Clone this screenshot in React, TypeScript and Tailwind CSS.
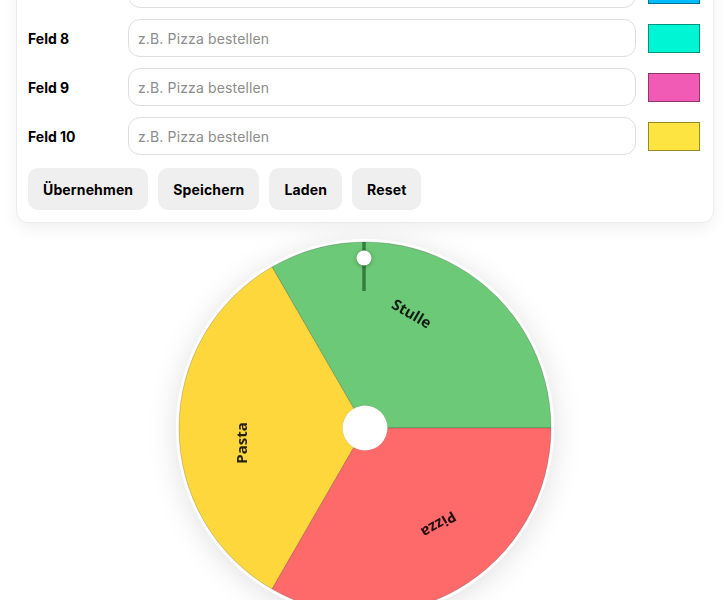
import React from 'react';

interface Field {
  label: string;
  color: string;
}

const fields: Field[] = [
  { label: 'Feld 7', color: '#00bbf9' },
  { label: 'Feld 8', color: '#00f5d4' },
  { label: 'Feld 9', color: '#f15bb5' },
  { label: 'Feld 10', color: '#fee440' },
];

const buttons = ['Übernehmen', 'Speichern', 'Laden', 'Reset'];

// wheel geometry (svg coords): center 189/189, radius 186
const Wheel: React.FC = () => (
  <svg width="378" height="378" viewBox="0 0 378 378" className="block drop-shadow-[0_4px_14px_rgba(0,0,0,0.12)]">
    <circle cx="189" cy="189" r="189" fill="#ffffff" />
    <path d="M189 189 L375 189 A186 186 0 0 0 96 27.92 Z" fill="#6cc977" stroke="rgba(0,0,0,0.18)" strokeWidth="1" />
    <path d="M189 189 L96 27.92 A186 186 0 0 0 96 350.08 Z" fill="#fdd73c" stroke="rgba(0,0,0,0.18)" strokeWidth="1" />
    <path d="M189 189 L96 350.08 A186 186 0 0 0 375 189 Z" fill="#fe6a6a" stroke="rgba(0,0,0,0.18)" strokeWidth="1" />

    <g fontFamily="'Open Sans', 'DejaVu Sans', sans-serif" fontWeight="700" fontSize="15" fill="rgba(0,0,0,0.85)" textAnchor="middle" dominantBaseline="central">
      <text transform="translate(236 74) rotate(30)">Stulle</text>
      <text transform="translate(65 204) rotate(-90)">Pasta</text>
      <text transform="translate(263 286) rotate(150)">Pizza</text>
    </g>

    {/* pointer */}
    <line x1="188" y1="3" x2="188" y2="52" stroke="rgba(0,50,10,0.5)" strokeWidth="3.5" />
    <circle cx="188" cy="19" r="7.5" fill="#ffffff" className="drop-shadow-[0_1px_2px_rgba(0,0,0,0.3)]" />

    {/* hub */}
    <circle cx="189" cy="189" r="22.5" fill="#ffffff" stroke="rgba(0,0,0,0.06)" strokeWidth="1" />
  </svg>
);

export default function App() {
  return (
    <div className="min-h-[600px] bg-white overflow-hidden font-['Inter',sans-serif] text-black">
      <div className="ml-4 mr-[10px] -mt-[43px] rounded-xl border border-[#ededed] bg-white pl-[11px] pr-[13px] pt-3 pb-3 shadow-[0_6px_16px_rgba(0,0,0,0.06)]">
        <div className="flex flex-col gap-[11px]">
          {fields.map((f) => (
            <div key={f.label} className="flex items-center">
              <div className="w-[100px] shrink-0 text-[14px] font-bold">{f.label}</div>
              <input
                type="text"
                placeholder="z.B. Pizza bestellen"
                className="h-[38px] min-w-0 flex-1 rounded-xl border border-[#dedede] bg-white px-[9px] text-[14px] tracking-[0.01em] placeholder:text-[#8c8c8c] outline-none"
              />
              <div
                className="ml-3 h-[29px] w-[52px] shrink-0 border border-black/40"
                style={{ backgroundColor: f.color }}
              />
            </div>
          ))}
        </div>
        <div className="mt-[13px] flex gap-[10px]">
          {buttons.map((b) => (
            <button
              key={b}
              className="h-[42px] rounded-[10px] bg-[#efefef] px-[15px] text-[14px] font-bold tracking-[0.01em]"
            >
              {b}
            </button>
          ))}
        </div>
      </div>

      <div className="mt-[16px] flex justify-center pl-[6px]">
        <Wheel />
      </div>
    </div>
  );
}
